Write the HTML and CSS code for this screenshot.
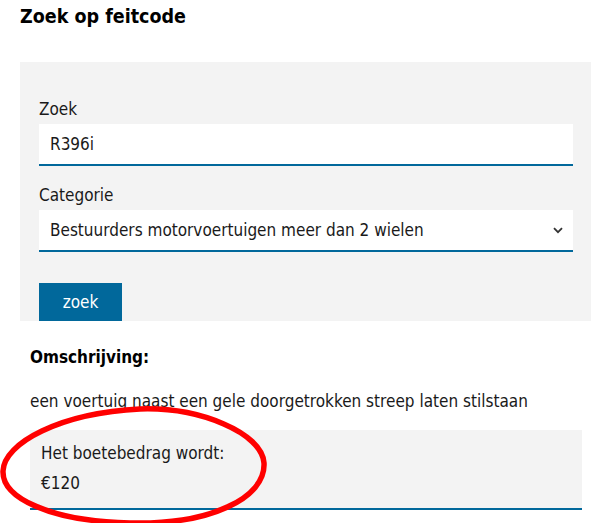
FILE: index.html
```html
<!DOCTYPE html>
<html lang="nl">
<head>
<meta charset="utf-8">
<link rel="stylesheet" href="styles.css">
</head>
<body>
<h1 class="title">Zoek op feitcode</h1>
<form class="panel">
  <label class="label" for="q">Zoek</label>
  <div class="field"><span class="field-text">R396i</span></div>
  <label class="label" for="c">Categorie</label>
  <div class="field select">
    <span class="field-text">Bestuurders motorvoertuigen meer dan 2 wielen</span>
    <svg class="chev" width="10" height="7" viewBox="0 0 10 7"><path d="M1 1.2 L5 5.2 L9 1.2" fill="none" stroke="#333" stroke-width="1.8"/></svg>
  </div>
  <button class="btn" type="button">zoek</button>
</form>
<section class="result">
  <h2 class="sub">Omschrijving:</h2>
  <p class="desc">een voertuig naast een gele doorgetrokken streep laten stilstaan</p>
  <div class="amount">
    <div class="amount-label">Het boetebedrag wordt:</div>
    <div class="amount-value">€120</div>
  </div>
</section>
<svg class="circle" width="280" height="130" viewBox="0 0 280 130">
  <path d="M140 6 C 200 4, 262 30, 264 60 C 266 95, 210 122, 130 120 C 50 118, 2 95, 3 68 C 4 40, 60 10, 140 6 Z" fill="none" stroke="#ff0000" stroke-width="5.5"/>
</svg>
</body>
</html>
```
FILE: styles.css
```css
* { box-sizing: border-box; }
html, body { margin: 0; padding: 0; background: #fff; }
body {
  font-family: "DejaVu Sans Condensed", "Noto Sans", sans-serif;
  color: #1a1a1a;
  padding: 0 12px 0 20px;
  position: relative;
  height: 523px;
  overflow: hidden;
}
.title {
  font-size: 19.5px;
  font-weight: 700;
  margin: 0;
  padding-top: 4px;
  line-height: 26px;
  color: #000;
}
.panel {
  margin-top: 32px;
  background: #f3f3f3;
  padding: 36px 18px 0 19px;
  display: flex;
  flex-direction: column;
}
.label {
  font-size: 17px;
  line-height: 22px;
  margin-bottom: 4px;
}
.field {
  background: #fff;
  height: 42px;
  border-bottom: 2px solid #01689b;
  display: flex;
  align-items: center;
  padding: 0 10px 0 11px;
  margin-bottom: 18px;
  font-size: 17px;
}
.select { justify-content: space-between; margin-bottom: 31px; }
.btn {
  align-self: flex-start;
  background: #01689b;
  color: #fff;
  border: 0;
  font-family: inherit;
  font-size: 17px;
  width: 83px;
  height: 38px;
  padding: 0;
}
.result { padding: 0 9px 0 10px; }
.sub {
  font-size: 17px;
  font-weight: 700;
  margin: 24px 0 0 0;
  line-height: 24px;
  color: #000;
}
.desc {
  font-size: 17px;
  line-height: 22px;
  margin: 21px 0 0 0;
}
.amount {
  margin-top: 18px;
  background: #f3f3f3;
  border-bottom: 2px solid #01689b;
  padding: 12px 11px 14px;
  font-size: 17px;
  line-height: 22px;
}
.amount-value { margin-top: 8px; }
.circle {
  position: absolute;
  left: 0;
  top: 403px;
}
```
